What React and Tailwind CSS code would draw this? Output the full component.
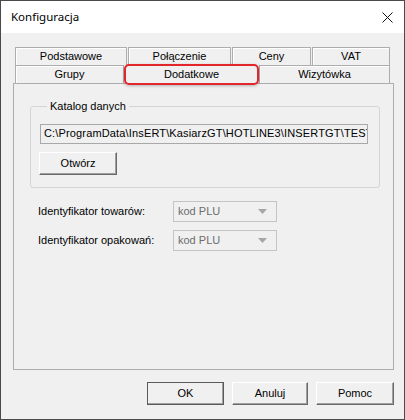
import React from 'react';

const Tab = ({ label, w, className = '' }) => (
    <div
        className={`h-[18px] flex items-center justify-center border-t border-l border-r border-[#adadad] bg-[#f0f0f0] shadow-[inset_1px_1px_0_#ffffff] ${className}`}
        style={{ width: w }}
    >
        {label}
    </div>
);

const Button = ({ children, w, def }) => (
    <button
        className={`h-[23px] flex items-center justify-center bg-[#f0f0f0] border ${def ? 'border-[#5a5a5a]' : 'border-t-white border-l-white border-b-[#696969] border-r-[#696969]'} shadow-[inset_-1px_-1px_0_#a0a0a0]`}
        style={{ width: w }}
    >
        {children}
    </button>
);

const Select = () => (
    <div className="w-[104px] h-[21px] border border-[#c4c4c4] bg-[#f0f0f0] flex items-center justify-between pl-[4px] pr-[9px] text-[#6d6d6d]">
        <span>kod PLU</span>
        <svg width="9" height="5" viewBox="0 0 9 5">
            <path d="M0 0 H9 L4.5 5 Z" fill="#a6a6a6" />
        </svg>
    </div>
);

const App = () => {
    return (
        <div className="w-[405px] h-[420px] border border-[#4a4a4a] bg-[#f0f0f0] flex flex-col text-[11px] text-black font-['Liberation_Sans',Arial,sans-serif]">
            <div className="h-[32px] bg-white flex items-center justify-between pl-[10px] pr-[11px]">
                <span className="text-[11.5px] font-['Noto_Sans',sans-serif]">Konfiguracja</span>
                <svg width="11" height="11" viewBox="0 0 11 11">
                    <path d="M0.5 0.5 L10.5 10.5 M10.5 0.5 L0.5 10.5" stroke="#111" strokeWidth="1" />
                </svg>
            </div>
            <div className="flex-1 pl-[12px] pt-[14px]">
                <div className="ml-[2px] w-[375px]">
                    <div className="flex gap-[1px]">
                        <Tab label="Podstawowe" w={112} />
                        <Tab label="Połączenie" w={103} />
                        <Tab label="Ceny" w={79} />
                        <Tab label="VAT" w={78} />
                    </div>
                    <div className="flex">
                        <Tab label="Grupy" w={109} />
                        <div className="relative">
                            <Tab label="Dodatkowe" w={135} className="border-none shadow-none" />
                            <div className="absolute left-0 right-0 top-[-1px] bottom-[-2px] border-2 border-[#e3262b] rounded-[5px] shadow-[0_1px_3px_rgba(0,0,0,0.25)]" />
                        </div>
                        <Tab label="Wizytówka" w={131} />
                    </div>
                </div>
                <div className="w-[381px] h-[287px] border border-[#adadad] pl-[16px] pt-[14px]">
                    <fieldset className="w-[350px] border border-[#d5d5d5] rounded-[3px] pl-[9px] pb-[12px]">
                        <legend className="ml-[7px] px-[3px]">Katalog danych</legend>
                        <div className="mt-[9px] w-[328px] h-[20px] border border-[#a8a8a8] bg-[#f0f0f0] flex items-center pl-[3px] overflow-hidden whitespace-nowrap tracking-[0.15px]">
                            C:\ProgramData\InsERT\KasiarzGT\HOTLINE3\INSERTGT\TESTOWA
                        </div>
                        <div className="mt-[8px] -ml-[1px]">
                            <Button w={78}>Otwórz</Button>
                        </div>
                    </fieldset>
                    <div className="pl-[8px] mt-[13px] flex flex-col gap-[8px]">
                        <div className="flex items-center">
                            <span className="w-[135px]">Identyfikator towarów:</span>
                            <Select />
                        </div>
                        <div className="flex items-center">
                            <span className="w-[135px]">Identyfikator opakowań:</span>
                            <Select />
                        </div>
                    </div>
                </div>
                <div className="w-[381px] flex justify-end gap-[8px] mt-[12px]">
                    <Button w={77} def>OK</Button>
                    <Button w={76}>Anuluj</Button>
                    <Button w={78}>Pomoc</Button>
                </div>
            </div>
        </div>
    );
};

export default App;
